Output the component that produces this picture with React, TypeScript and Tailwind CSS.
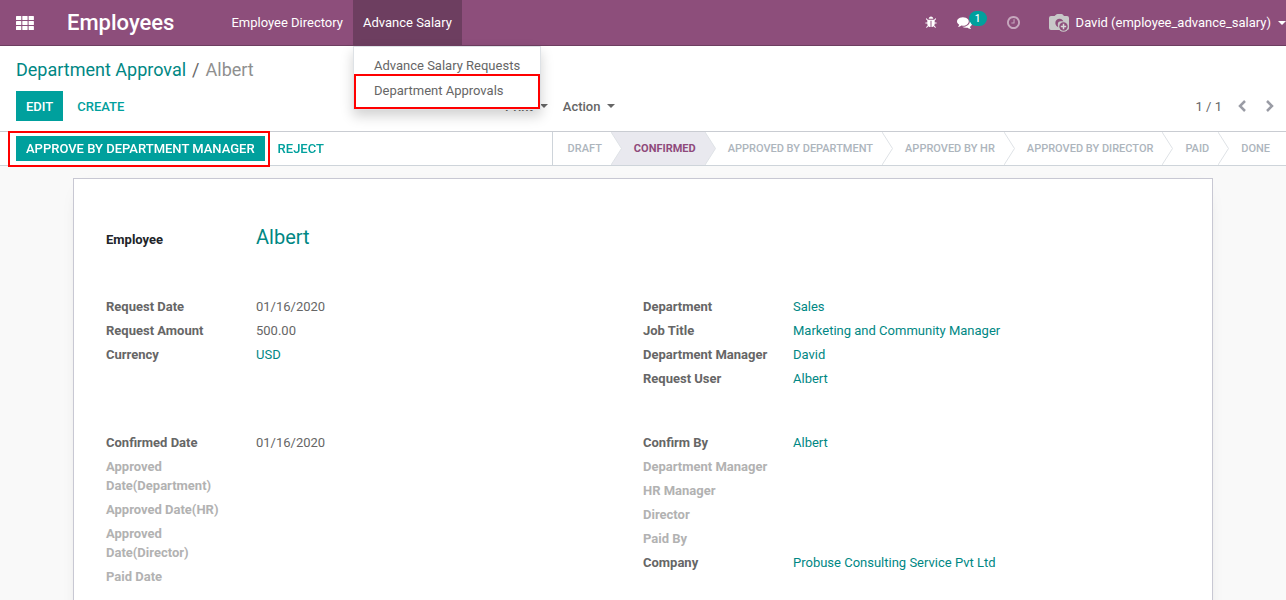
import React from "react";

type Field = { label: string; value?: string; link?: boolean };

const requestLeft: Field[] = [
  { label: "Request Date", value: "01/16/2020" },
  { label: "Request Amount", value: "500.00" },
  { label: "Currency", value: "USD", link: true },
];
const requestRight: Field[] = [
  { label: "Department", value: "Sales", link: true },
  { label: "Job Title", value: "Marketing and Community Manager", link: true },
  { label: "Department Manager", value: "David", link: true },
  { label: "Request User", value: "Albert", link: true },
];
const approvalLeft: Field[] = [
  { label: "Confirmed Date", value: "01/16/2020" },
  { label: "Approved Date(Department)" },
  { label: "Approved Date(HR)" },
  { label: "Approved Date(Director)" },
  { label: "Paid Date" },
];
const approvalRight: Field[] = [
  { label: "Confirm By", value: "Albert", link: true },
  { label: "Department Manager" },
  { label: "HR Manager" },
  { label: "Director" },
  { label: "Paid By" },
  { label: "Company", value: "Probuse Consulting Service Pvt Ltd", link: true },
];

const stages = ["Draft", "Confirmed", "Approved By Department", "Approved By HR", "Approved By Director", "Paid", "Done"];
const currentStage = 1;

function Caret() {
  return (
    <svg viewBox="0 0 8 4" className="h-1 w-2 shrink-0" fill="currentColor" aria-hidden="true">
      <path d="M0 0h8L4 4z" />
    </svg>
  );
}

function AppsIcon() {
  return (
    <svg viewBox="0 0 18 14" className="h-[14px] w-[18px]" fill="currentColor" aria-hidden="true">
      {[0, 5, 10].map((y) =>
        [0, 6.3, 12.6].map((x) => <rect key={`${x}-${y}`} x={x} y={y} width="5.3" height="4" rx="0.6" />),
      )}
    </svg>
  );
}

function BugIcon() {
  return (
    <svg viewBox="0 0 1664 1792" className="h-[13px] w-3" fill="currentColor" aria-hidden="true">
      <path d="M1632 960q0 26-19 45t-45 19h-224q0 171-67 290l208 209q19 19 19 45t-19 45q-18 19-45 19t-45-19l-198-197q-5 5-15 13t-42 28.500-65 36.500-82 29-97 13V640H768v896q-51 0-101.500-13.500t-87-33-66-39T470 1418l-15-14-183 207q-20 21-48 21-24 0-43-16-19-18-20.500-44.500T176 1525l202-227q-58-114-58-274H96q-26 0-45-19t-19-45 19-45 45-19h224V602L147 429q-19-19-19-45t19-45 45-19 45 19l173 173h844l173-173q19-19 45-19t45 19 19 45-19 45l-173 173v294h224q26 0 45 19t19 45zM1152 384H512q0-133 93.500-226.500T832 64t226.500 93.500T1152 384z" />
    </svg>
  );
}

function CommentsIcon() {
  return (
    <svg viewBox="0 0 1792 1792" className="h-[15px] w-[15px]" fill="currentColor" aria-hidden="true">
      <path d="M1408 768q0 139-94 257t-256.500 186.500T704 1280q-86 0-176-16-124 88-278 128-36 9-86 16h-3q-11 0-20.500-8t-11.500-21q-1-3-1-6.500t.5-6.500 2-6l2.500-5 3.500-5.500 4-5 4.500-5 4-4.500q5-6 23-25t26-29.500 22.500-29 25-38.500 20.500-44q-124-72-195-177T0 768q0-139 94-257t256.500-186.500T704 256t353.500 68.500T1314 511t94 257zm384 256q0 120-71 224.500T1526 1425q10 24 20.500 44t25 38.500 22.500 29 26 29.500 23 25q1 1 4 4.500t4.500 5 4 5 3.500 5.500l2.500 5 2 6 .5 6.500-1 6.500q-3 14-13 22t-22 7q-50-7-86-16-154-40-278-128-90 16-176 16-271 0-472-132 58 4 88 4 161 0 309-45t264-129q125-92 192-212t67-254q0-77-23-152 129 71 204 178t75 230z" />
    </svg>
  );
}

function ClockIcon() {
  return (
    <svg viewBox="0 0 1536 1536" className="h-[13px] w-[13px]" fill="currentColor" aria-hidden="true">
      <path d="M896 416v448q0 14-9 23t-23 9H544q-14 0-23-9t-9-23v-64q0-14 9-23t23-9h224V416q0-14 9-23t23-9h64q14 0 23 9t9 23zm416 352q0-148-73-273t-198-198-273-73-273 73-198 198-73 273 73 273 198 198 273 73 273-73 198-198 73-273zm224 0q0 209-103 385.500T1153.500 1433 768 1536t-385.500-103T103 1153.500 0 768t103-385.500T382.500 103 768 0t385.500 103T1433 382.500 1536 768z" />
    </svg>
  );
}

function CameraIcon() {
  return (
    <svg viewBox="0 0 21 18" className="h-[18px] w-[21px]" aria-hidden="true">
      <path d="M2 2h3.500L7 .8Q7.500 0 8.500 0h4q1 0 1.500.8L15 2h3q2 0 2 2v10q0 2-2 2H2q-2 0-2-2V4q0-2 2-2z" fill="#c8c8c8" />
      <circle cx="10.5" cy="9" r="4.2" fill="#8d4e7b" />
      <circle cx="12" cy="10.5" r="3.2" fill="#c8c8c8" />
      <circle cx="14.5" cy="12.500" r="5.300" fill="#c8c8c8" />
      <circle cx="14.5" cy="12.500" r="4.200" fill="#8d4e7b" />
      <path d="M11.800 12.500h5.400M14.500 9.800v5.400" stroke="#d8d8d8" strokeWidth="1.500" />
    </svg>
  );
}

function Chevron({ flip }: { flip?: boolean }) {
  return (
    <svg viewBox="0 0 8 12" className={flip ? "h-3 w-2 rotate-180" : "h-3 w-2"} fill="none" stroke="currentColor" strokeWidth="2.500" aria-hidden="true">
      <path d="M7 1L2 6l5 5" />
    </svg>
  );
}

function FieldList({ fields }: { fields: Field[] }) {
  return (
    <dl className="flex flex-1 flex-col gap-[5px]">
      {fields.map((f) => (
        <div key={f.label} className="flex leading-[19px]">
          <dt className={`w-[150px] shrink-0 pr-6 font-bold ${f.value ? "text-[#666666]" : "text-[#b2b2b2]"}`}>{f.label}</dt>
          <dd>{f.link ? <a href="#" className="text-[#008784]">{f.value}</a> : f.value}</dd>
        </div>
      ))}
    </dl>
  );
}

function StatusBar() {
  return (
    <ol className="flex h-[33px] border-l border-[#ced4da] text-[11px] uppercase">
      {stages.map((s, i) => {
        const active = i === currentStage;
        const last = i === stages.length - 1;
        return (
          <li key={s} className={`flex ${active ? "bg-[#e9e9ef]" : ""}`}>
            <button type="button" className={`uppercase ${i === 0 ? "pl-[15px]" : "pl-3"} ${last ? "pr-4" : "pr-[9px]"} ${active ? "font-bold text-[#8f4a7b]" : "font-medium text-[#adb5bd]"}`}>
              {s}
            </button>
            {!last && (
              <svg viewBox="0 0 11 33" className="h-[33px] w-[11px]" aria-hidden="true">
                {active && <path d="M0 0h11v33H0z" fill="#fff" />}
                {i + 1 === currentStage && <path d="M0 0h11v33H0z" fill="#e9e9ef" />}
                <path d="M0 0l10.500 16.500L0 33z" fill={active ? "#e9e9ef" : "#fff"} />
                <path d="M0 0l10.500 16.500L0 33" fill="none" stroke="#dee2e6" />
              </svg>
            )}
          </li>
        );
      })}
    </ol>
  );
}

export default function App() {
  return (
    <div className="flex h-screen flex-col overflow-hidden bg-white font-['Roboto',sans-serif] text-[13px] leading-[19px] text-[#666666]">
      <header className="relative z-20 flex h-[46px] shrink-0 items-stretch border-b border-[#6d3e60] bg-[#8d4e7b] text-white">
        <button type="button" aria-label="Applications" className="px-4">
          <AppsIcon />
        </button>
        <a href="#" className="ml-[17px] flex items-center text-[22px] font-medium">Employees</a>
        <nav className="ml-[47px] flex">
          <a href="#" className="flex items-center px-[10px]">Employee Directory</a>
          <div className="relative flex">
            <button type="button" aria-expanded="true" className="bg-[#6d3e60] px-[10px]">Advance Salary</button>
            <div className="absolute top-full left-0 mt-px flex flex-col border border-[#dee2e6] bg-white pt-[9px] whitespace-nowrap text-[#666666] shadow-[0_6px_12px_rgba(0,0,0,0.18)]">
              <a href="#" className="px-5">Advance Salary Requests</a>
              <a href="#" className="-mt-px border-2 border-[#ff0000] px-[18px] pt-[5px] pb-[7px]">Department Approvals</a>
            </div>
          </div>
        </nav>
        <div className="ml-auto flex items-center">
          <button type="button" aria-label="Debug"><BugIcon /></button>
          <button type="button" aria-label="Conversations" className="ml-5 flex">
            <CommentsIcon />
            <span className="-mt-1 -ml-[3px] flex h-[15px] w-[18px] items-center justify-center rounded-full bg-[#00a09d] text-[10px] font-medium">1</span>
          </button>
          <button type="button" aria-label="Activities" className="ml-5 opacity-50"><ClockIcon /></button>
          <button type="button" className="ml-[29px] flex items-center">
            <CameraIcon />
            <span className="ml-[6px] mr-[7px]">David (employee_advance_salary)</span>
            <Caret />
          </button>
        </div>
      </header>

      <section className="flex shrink-0 flex-col border-b border-[#c9ccd2] pt-3 pr-3 pb-[10px] pl-4">
        <nav aria-label="Breadcrumb" className="flex gap-[6px] text-lg leading-6">
          <a href="#" className="text-[#008784]">Department Approval</a>
          <span>/</span>
          <span className="text-[#8f8f8f]">Albert</span>
        </nav>
        <div className="mt-[9px] flex h-[30px] items-stretch font-medium">
          <div className="flex flex-1">
            <button type="button" className="bg-[#00a09d] px-[10px] text-white">EDIT</button>
            <button type="button" className="px-[14px] text-[#00a09d]">CREATE</button>
          </div>
          <div className="flex flex-1 items-center justify-between">
            <div className="-ml-[140px] flex gap-[15px]">
              <button type="button" className="flex items-center gap-[7px]">Print <Caret /></button>
              <button type="button" className="flex items-center gap-[7px]">Action <Caret /></button>
            </div>
            <div className="flex items-center">
              <span className="font-normal">1 / 1</span>
              <button type="button" aria-label="Previous" className="ml-4 text-[#9a9ca5]"><Chevron /></button>
              <button type="button" aria-label="Next" className="ml-5 text-[#9a9ca5]"><Chevron flip /></button>
            </div>
          </div>
        </div>
      </section>

      <section className="flex h-[34px] shrink-0 justify-between border-b border-[#ced4da]">
        <div className="relative z-10 -mt-px flex h-9 pl-2 font-medium">
          <div className="flex items-center border-2 border-[#ff0000] pr-[3px] pb-px pl-[6px]">
            <button type="button" className="h-[25px] bg-[#00a09d] px-[10px] text-white">APPROVE BY DEPARTMENT MANAGER</button>
          </div>
          <button type="button" className="px-2 pb-px text-[#00a09d]">REJECT</button>
        </div>
        <StatusBar />
      </section>

      <main className="flex min-h-0 flex-1 items-start justify-center overflow-y-auto bg-[#f9f9f9] px-[73px] pt-3 [scrollbar-width:none]">
        <article className="w-full max-w-[1140px] border border-[#c8c8d3] bg-white px-8 pt-[45px] pb-16 shadow-[0_5px_20px_-15px_rgba(0,0,0,0.4)]">
          <div className="flex items-baseline">
            <span className="w-[150px] font-bold text-[#212529]">Employee</span>
            <a href="#" className="text-[20px] leading-[26px] text-[#008784]">Albert</a>
          </div>
          <div className="mt-[47px] flex">
            <FieldList fields={requestLeft} />
            <FieldList fields={requestRight} />
          </div>
          <div className="mt-[45px] flex">
            <FieldList fields={approvalLeft} />
            <FieldList fields={approvalRight} />
          </div>
        </article>
      </main>
    </div>
  );
}
